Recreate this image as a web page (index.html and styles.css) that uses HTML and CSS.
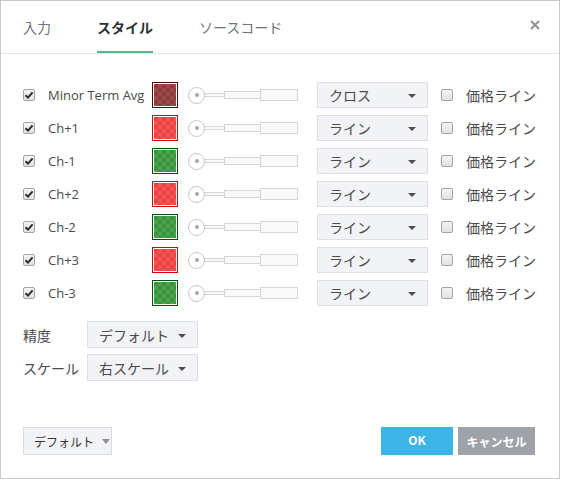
FILE: index.html
```html
<!DOCTYPE html>
<html lang="ja">
<head>
<meta charset="utf-8">
<title>スタイル</title>
<link rel="stylesheet" href="styles.css">
</head>
<body>
<div class="dialog">
  <div class="header">
    <div class="tab">入力</div>
    <div class="tab active">スタイル</div>
    <div class="tab">ソースコード</div>
    <div class="close">
      <svg width="10" height="10" viewBox="0 0 10 10"><path d="M1 1L9 9M9 1L1 9" stroke="#8f9299" stroke-width="2"/></svg>
    </div>
  </div>
  <div class="content">
    <div class="row">
      <span class="cb checked"><svg viewBox="0 0 12 12"><path d="M2.5 6.2L5 8.6L9.6 3.4" fill="none" stroke="#2b2b2b" stroke-width="2"/></svg></span>
      <span class="label">Minor Term Avg</span>
      <span class="swatch maroon"><span class="fill"></span></span>
      <span class="slider"><span class="knob"><span class="dot"></span></span><span class="seg s1"></span><span class="seg s2"></span><span class="seg s3"></span></span>
      <span class="select wide"><span class="val">クロス</span><span class="caret"></span></span>
      <span class="cb"></span>
      <span class="plabel">価格ライン</span>
    </div>
    <div class="row">
      <span class="cb checked"><svg viewBox="0 0 12 12"><path d="M2.5 6.2L5 8.6L9.6 3.4" fill="none" stroke="#2b2b2b" stroke-width="2"/></svg></span>
      <span class="label">Ch+1</span>
      <span class="swatch red"><span class="fill"></span></span>
      <span class="slider"><span class="knob"><span class="dot"></span></span><span class="seg s1"></span><span class="seg s2"></span><span class="seg s3"></span></span>
      <span class="select wide"><span class="val">ライン</span><span class="caret"></span></span>
      <span class="cb"></span>
      <span class="plabel">価格ライン</span>
    </div>
    <div class="row">
      <span class="cb checked"><svg viewBox="0 0 12 12"><path d="M2.5 6.2L5 8.6L9.6 3.4" fill="none" stroke="#2b2b2b" stroke-width="2"/></svg></span>
      <span class="label">Ch-1</span>
      <span class="swatch green"><span class="fill"></span></span>
      <span class="slider"><span class="knob"><span class="dot"></span></span><span class="seg s1"></span><span class="seg s2"></span><span class="seg s3"></span></span>
      <span class="select wide"><span class="val">ライン</span><span class="caret"></span></span>
      <span class="cb"></span>
      <span class="plabel">価格ライン</span>
    </div>
    <div class="row">
      <span class="cb checked"><svg viewBox="0 0 12 12"><path d="M2.5 6.2L5 8.6L9.6 3.4" fill="none" stroke="#2b2b2b" stroke-width="2"/></svg></span>
      <span class="label">Ch+2</span>
      <span class="swatch red"><span class="fill"></span></span>
      <span class="slider"><span class="knob"><span class="dot"></span></span><span class="seg s1"></span><span class="seg s2"></span><span class="seg s3"></span></span>
      <span class="select wide"><span class="val">ライン</span><span class="caret"></span></span>
      <span class="cb"></span>
      <span class="plabel">価格ライン</span>
    </div>
    <div class="row">
      <span class="cb checked"><svg viewBox="0 0 12 12"><path d="M2.5 6.2L5 8.6L9.6 3.4" fill="none" stroke="#2b2b2b" stroke-width="2"/></svg></span>
      <span class="label">Ch-2</span>
      <span class="swatch green"><span class="fill"></span></span>
      <span class="slider"><span class="knob"><span class="dot"></span></span><span class="seg s1"></span><span class="seg s2"></span><span class="seg s3"></span></span>
      <span class="select wide"><span class="val">ライン</span><span class="caret"></span></span>
      <span class="cb"></span>
      <span class="plabel">価格ライン</span>
    </div>
    <div class="row">
      <span class="cb checked"><svg viewBox="0 0 12 12"><path d="M2.5 6.2L5 8.6L9.6 3.4" fill="none" stroke="#2b2b2b" stroke-width="2"/></svg></span>
      <span class="label">Ch+3</span>
      <span class="swatch red"><span class="fill"></span></span>
      <span class="slider"><span class="knob"><span class="dot"></span></span><span class="seg s1"></span><span class="seg s2"></span><span class="seg s3"></span></span>
      <span class="select wide"><span class="val">ライン</span><span class="caret"></span></span>
      <span class="cb"></span>
      <span class="plabel">価格ライン</span>
    </div>
    <div class="row">
      <span class="cb checked"><svg viewBox="0 0 12 12"><path d="M2.5 6.2L5 8.6L9.6 3.4" fill="none" stroke="#2b2b2b" stroke-width="2"/></svg></span>
      <span class="label">Ch-3</span>
      <span class="swatch green"><span class="fill"></span></span>
      <span class="slider"><span class="knob"><span class="dot"></span></span><span class="seg s1"></span><span class="seg s2"></span><span class="seg s3"></span></span>
      <span class="select wide"><span class="val">ライン</span><span class="caret"></span></span>
      <span class="cb"></span>
      <span class="plabel">価格ライン</span>
    </div>

    <div class="opts">
      <div class="orow">
        <span class="olabel">精度</span>
        <span class="select narrow"><span class="val">デフォルト</span><span class="caret"></span></span>
      </div>
      <div class="orow">
        <span class="olabel">スケール</span>
        <span class="select narrow"><span class="val">右スケール</span><span class="caret"></span></span>
      </div>
    </div>
  </div>
  <div class="footer">
    <div class="defbtn">デフォルト<span class="gcaret"></span></div>
    <div class="spacer"></div>
    <div class="btn ok">OK</div>
    <div class="btn cancel">キャンセル</div>
  </div>
</div>
</body>
</html>
```
FILE: styles.css
```css
html, body {
  margin: 0;
  padding: 0;
  background: #ffffff;
}
body {
  font-family: "Open Sans", "Noto Sans CJK JP", sans-serif;
  color: #4a4a4a;
}
.dialog {
  width: 560px;
  height: 479px;
  box-sizing: border-box;
  border: 1px solid #c8cacf;
  display: flex;
  flex-direction: column;
  background: #fff;
}
.header {
  height: 53px;
  box-sizing: border-box;
  border-bottom: 1px solid #e0e3e8;
  display: flex;
  align-items: stretch;
  padding-left: 22px;
  flex-shrink: 0;
}
.tab {
  font-family: "Noto Sans CJK JP", sans-serif;
  font-size: 14px;
  color: #6f727a;
  display: flex;
  align-items: center;
  margin-right: 46px;
  box-sizing: border-box;
  border-bottom: 2px solid transparent;
  padding-top: 1px;
}
.tab.active {
  color: #2d3038;
  font-weight: bold;
  border-bottom-color: #53b98a;
}
.close {
  margin-left: auto;
  margin-right: 19px;
  display: flex;
  align-items: center;
  padding-bottom: 4px;
}
.close svg { display: block; }

.content {
  padding: 28px 0 0 22px;
}
.row {
  display: flex;
  align-items: center;
  height: 26px;
  margin-bottom: 7px;
}
.cb {
  width: 12px;
  height: 12px;
  box-sizing: border-box;
  border: 1px solid #a2a4a8;
  border-radius: 2px;
  background: linear-gradient(#f4f4f4, #e2e2e2);
  display: inline-block;
  flex: none;
}
.cb svg {
  display: block;
  width: 12px;
  height: 12px;
  margin: -1px 0 0 -1px;
}
.label {
  font-size: 13px;
  width: 104px;
  margin-left: 13px;
  white-space: nowrap;
  color: #4a4a4a;
}
.swatch {
  width: 26px;
  height: 26px;
  box-sizing: border-box;
  border: 1px solid #4d0b0b;
  padding: 1px;
  background: #fff;
  flex: none;
}
.swatch .fill {
  display: block;
  width: 100%;
  height: 100%;
}
.swatch.maroon { border-color: #4f0a0a; }
.swatch.maroon .fill {
  background: repeating-conic-gradient(#9b4a4a 0 25%, #8b3c3c 0 50%) 0 0 / 8px 8px;
}
.swatch.red { border-color: #e00000; }
.swatch.red .fill {
  background: repeating-conic-gradient(#f45454 0 25%, #e84242 0 50%) 0 0 / 8px 8px;
}
.swatch.green { border-color: #005500; }
.swatch.green .fill {
  background: repeating-conic-gradient(#4ba44b 0 25%, #3c923c 0 50%) 0 0 / 8px 8px;
}
.slider {
  display: flex;
  align-items: center;
  margin-left: 10px;
  flex: none;
}
.knob {
  width: 17px;
  height: 17px;
  box-sizing: border-box;
  border: 1px solid #c3c6cc;
  border-radius: 50%;
  background: #fff;
  flex: none;
  display: flex;
  align-items: center;
  justify-content: center;
  position: relative;
  z-index: 1;
}
.dot {
  width: 4px;
  height: 4px;
  border-radius: 50%;
  background: #a3a7ae;
}
.seg {
  box-sizing: border-box;
  border: 1px solid #d3d5d9;
  background: #f9f9fa;
  margin-left: -1px;
  flex: none;
}
.s1 { width: 21px; height: 4px; }
.s2 { width: 37px; height: 8px; }
.s3 { width: 38px; height: 12px; }
.select {
  height: 26px;
  box-sizing: border-box;
  border: 1px solid #dcdfe4;
  background: #f2f3f6;
  display: flex;
  align-items: center;
  padding: 0 11px 0 11px;
  font-family: "Noto Sans CJK JP", sans-serif;
  font-size: 14px;
  color: #4a4a4a;
  flex: none;
}
.select.wide {
  width: 111px;
  margin-left: 19px;
  margin-right: 13px;
}
.select.narrow {
  width: 111px;
  height: 27px;
}
.val { flex: 1; white-space: nowrap; }
.caret {
  width: 0;
  height: 0;
  border-left: 4px solid transparent;
  border-right: 4px solid transparent;
  border-top: 4px solid #4d4d4d;
  margin-top: 2px;
}
.plabel {
  font-family: "Noto Sans CJK JP", sans-serif;
  font-size: 14px;
  margin-left: 13px;
  white-space: nowrap;
  color: #4a4a4a;
}
.opts {
  margin-top: 15px;
}
.orow {
  display: flex;
  align-items: center;
  height: 27px;
  margin-bottom: 6px;
}
.olabel {
  width: 64px;
  font-family: "Noto Sans CJK JP", sans-serif;
  font-size: 14px;
  color: #4a4a4a;
}
.footer {
  margin-top: auto;
  display: flex;
  align-items: center;
  padding: 0 24px 23px 22px;
}
.spacer { flex: 1; }
.defbtn {
  height: 28px;
  width: 89px;
  box-sizing: border-box;
  border: 1px solid #d9dce1;
  background: #f2f3f6;
  display: flex;
  align-items: center;
  padding-left: 10px;
  font-family: "Noto Sans CJK JP", sans-serif;
  font-size: 12px;
  color: #333;
}
.gcaret {
  width: 0;
  height: 0;
  border-left: 4px solid transparent;
  border-right: 4px solid transparent;
  border-top: 5px solid #8e8e8e;
  margin-left: 8px;
  margin-top: 1px;
}
.btn {
  height: 28px;
  display: flex;
  align-items: center;
  justify-content: center;
  font-family: "Noto Sans CJK JP", sans-serif;
  font-size: 12px;
  font-weight: bold;
  color: #fff;
}
.ok {
  width: 72px;
  background: #3cb4e5;
  margin-right: 5px;
  padding-bottom: 3px;
  box-sizing: border-box;
}
.cancel {
  width: 77px;
  background: #9ea2a9;
}
```
